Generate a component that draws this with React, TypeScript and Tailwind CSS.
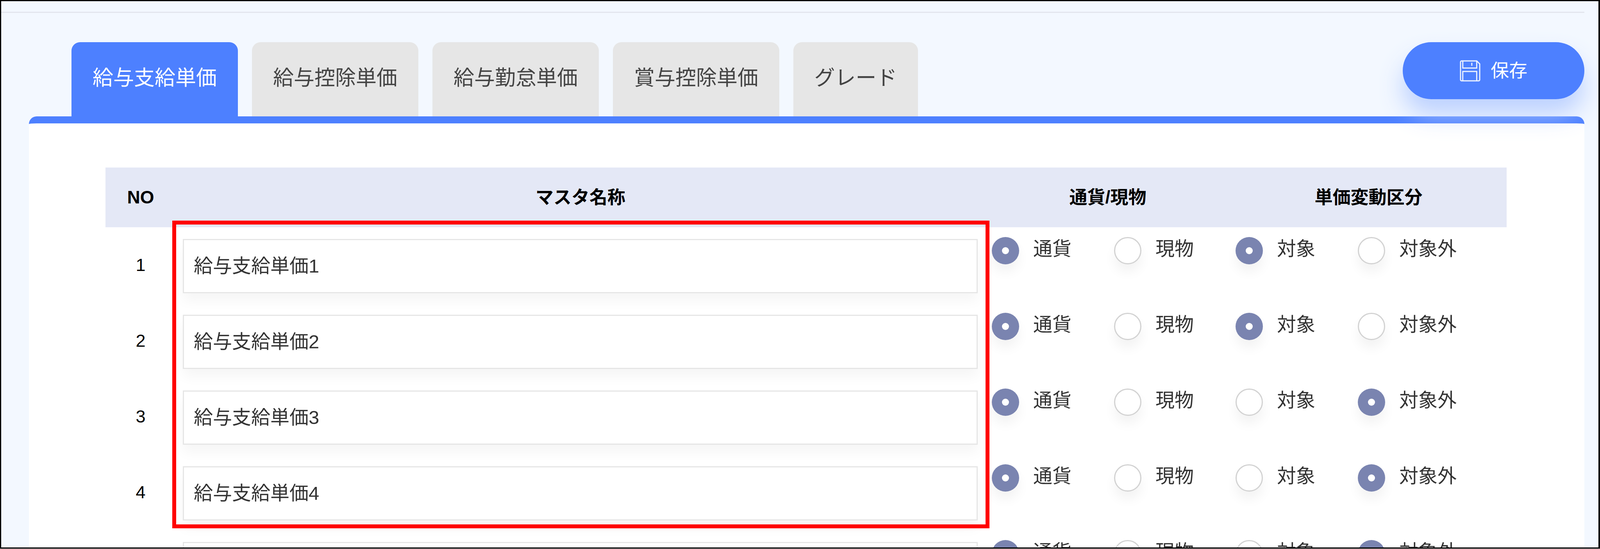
const rows = [
  { no: '1', name: '給与支給単価1', tgt: true },
  { no: '2', name: '給与支給単価2', tgt: true },
  { no: '3', name: '給与支給単価3', tgt: false },
  { no: '4', name: '給与支給単価4', tgt: false },
  { no: '', name: '', tgt: false },
];

const tabs = ['給与支給単価', '給与控除単価', '給与勤怠単価', '賞与控除単価', 'グレード'];

const Radio = ({ label, on }: { label: string; on: boolean }) => (
  <div className="flex w-[313px] shrink-0 items-start gap-[36px]">
    <span
      className={
        on
          ? 'flex h-[70px] w-[70px] shrink-0 items-center justify-center rounded-full bg-[#7a84b0] shadow-[0_20px_30px_rgba(0,0,0,0.05)]'
          : 'h-[70px] w-[70px] shrink-0 rounded-full border-[3px] border-[#d2d2d2] bg-white shadow-[0_20px_30px_rgba(0,0,0,0.05)]'
      }
    >
      {on && <span className="h-[18px] w-[18px] rounded-full bg-white" />}
    </span>
    <span className="text-[49px] leading-[60px] text-[#333]">{label}</span>
  </div>
);

const SaveIcon = () => (
  <svg viewBox="0 0 55 57" className="h-[57px] w-[53px]" fill="none" stroke="#eef3ff" strokeWidth="3">
    <path d="M5 2h40l8 8v42a3 3 0 0 1-3 3H5a3 3 0 0 1-3-3V5a3 3 0 0 1 3-3z" />
    <path d="M8 2v19h37V2" />
    <path d="M32 7v8" />
    <path d="M8 55V30h37v25" />
  </svg>
);

export default function App() {
  return (
    <div className="h-[1406px] w-full overflow-hidden bg-[#e0e0e0]">
      <div
        className="flex h-[1405px] flex-col overflow-hidden border-t-[3px] border-r-4 border-b-[3px] border-l-[3px] border-black bg-[#f3f8ff] text-black"
        style={{ fontFamily: '"Liberation Sans", "Noto Sans CJK JP", sans-serif' }}
      >
        <div className="mt-[27px] mr-[36px] h-[3px] shrink-0 bg-[#e3e6ee]" />
        <div className="relative z-10 mt-[75px] mr-[36px] ml-[180px] flex h-[190px] shrink-0 justify-between">
          <div className="flex gap-[36px]">
            {tabs.map((t, i) => (
              <div
                key={t}
                className={
                  i === 0
                    ? 'flex h-[190px] w-[426px] items-center justify-center rounded-t-[22px] bg-[#4d80ff] pb-[6px] text-[53px] text-white'
                    : i === 4
                      ? 'flex h-[190px] w-[319px] items-center justify-center rounded-t-[22px] bg-[#e6e6e6] pb-[6px] text-[53px] text-[#444]'
                      : 'flex h-[190px] w-[426px] items-center justify-center rounded-t-[22px] bg-[#e6e6e6] pb-[6px] text-[53px] text-[#444]'
                }
              >
                {t}
              </div>
            ))}
          </div>
          <div className="flex h-[146px] w-[465px] items-center justify-center gap-[26px] rounded-full bg-[#4d80ff] text-[47px] text-white shadow-[0_40px_60px_rgba(183,205,255,0.9)]">
            <SaveIcon />
            <span>保存</span>
          </div>
        </div>
        <div className="mr-[36px] ml-[71px] flex-1 rounded-t-[20px] border-t-[18px] border-[#4d80ff] bg-white pt-[113px] pl-[196px]">
          <div className="relative w-[3587px]">
            <div className="grid h-[153px] grid-cols-[180px_2072px_628px_707px] items-center bg-[#e4e8f6] text-center text-[46px] font-bold">
              <div>NO</div>
              <div>マスタ名称</div>
              <div>通貨/現物</div>
              <div>単価変動区分</div>
            </div>
            {rows.map((r, i) => (
              <div key={i} className="grid h-[194px] grid-cols-[180px_2072px_628px_707px]">
                <div className="flex h-[194px] items-center justify-center text-[45px]">{r.no}</div>
                <div className="pt-[30px] pr-[19px] pl-[18px]">
                  <div className="flex h-[139px] items-center border-[3px] border-[#e6e6e6] bg-white pl-[25px] text-[49px] text-[#333] shadow-[0_20px_30px_rgba(0,0,0,0.04)]">
                    {r.name}
                  </div>
                </div>
                <div className="flex pt-[25px] pl-[17px]">
                  <Radio label="通貨" on={true} />
                  <Radio label="現物" on={false} />
                </div>
                <div className="flex pt-[25px] pl-[13px]">
                  <Radio label="対象" on={r.tgt} />
                  <Radio label="対象外" on={!r.tgt} />
                </div>
              </div>
            ))}
            <div className="absolute top-[136px] left-[171px] h-[788px] w-[2092px] border-[10px] border-[#ff0000]" />
          </div>
        </div>
      </div>
    </div>
  );
}
